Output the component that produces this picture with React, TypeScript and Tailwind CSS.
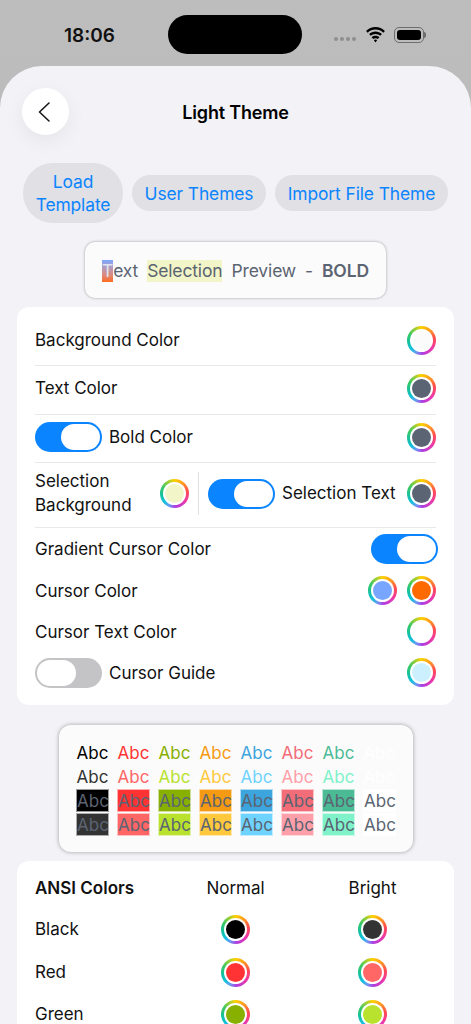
import React from 'react';

const normal = ['#000000', '#ff3333', '#88b000', '#f59a12', '#3da5dd', '#f26d78', '#4bbb96', '#ffffff'];
const bright = ['#333333', '#ff6666', '#b8e22e', '#ffc83d', '#6fd3ff', '#ff9fa9', '#7ff2c9', '#ffffff'];

function Well({ color }: { color: string }) {
  return (
    <div className="w-[29px] h-[29px] shrink-0 rounded-full p-[3px] bg-[conic-gradient(#ffd000_0deg,#ff9a20_40deg,#ff4a50_80deg,#ee38a8_125deg,#b03ce0_175deg,#6a9cf5_205deg,#12c0e0_228deg,#14c0a0_262deg,#3cc860_300deg,#a8d030_335deg,#ffd000_360deg)]">
      <div className="w-full h-full rounded-full bg-white p-[2px]">
        <div className="w-full h-full rounded-full" style={{ backgroundColor: color }} />
      </div>
    </div>
  );
}

function Toggle({ on }: { on: boolean }) {
  return on ? (
    <div className="w-[67px] h-[30px] shrink-0 rounded-full bg-[#0a84ff] p-[2px] flex justify-end">
      <div className="w-[39px] h-[26px] rounded-full bg-white" />
    </div>
  ) : (
    <div className="w-[67px] h-[30px] shrink-0 rounded-full bg-[#c4c4c6] p-[2px] flex justify-start">
      <div className="w-[39px] h-[26px] rounded-full bg-white" />
    </div>
  );
}

function Pill({ children, className }: { children: React.ReactNode; className: string }) {
  return (
    <div className={`bg-[#e0e0e5] text-[#0a84ff] text-center text-[17.4px] leading-[23px] tracking-[-0.1px] ${className}`}>
      {children}
    </div>
  );
}

function App() {
  return (
    <div className="h-[1024px] w-[471px] overflow-hidden bg-gradient-to-b from-[#bdbdbd] to-[#b0b0b0] text-[17px] text-[#111111] font-['Inter','Liberation_Sans',sans-serif]">
      <div className="h-[66px] flex pl-[64px]">
        <div className="w-[104px] pt-[23px] text-[19px] leading-[26px] font-semibold">18:06</div>
        <div className="w-[134px] h-[39px] mt-[15px] rounded-full bg-black" />
        <div className="ml-[32px] mt-[37px] flex gap-[2px] h-[5px]">
          <div className="w-[4px] h-[4px] rounded-full bg-[#8e8e8e]" />
          <div className="w-[4px] h-[4px] rounded-full bg-[#8e8e8e]" />
          <div className="w-[4px] h-[4px] rounded-full bg-[#8e8e8e]" />
          <div className="w-[4px] h-[4px] rounded-full bg-[#8e8e8e]" />
        </div>
        <svg className="ml-[9px] mt-[27px]" width="21" height="16" viewBox="0 0 21 16">
          <path d="M10.5 2.6c3 0 5.7 1.2 7.8 3.1l1.6-1.7C17.4 1.6 14.1 0 10.5 0S3.6 1.6 1.1 4l1.6 1.7c2.1-1.9 4.8-3.1 7.8-3.1z" fill="#000" />
          <path d="M10.5 7c1.8 0 3.4.7 4.7 1.8l1.7-1.7C15.2 5.5 13 4.5 10.5 4.5S5.8 5.5 4.1 7.1l1.7 1.7C7.1 7.7 8.7 7 10.5 7z" fill="#000" />
          <path d="M10.5 11.2c.9 0 1.6.3 2.2.8l1.7-1.7c-1-1-2.4-1.5-3.9-1.5s-2.9.5-3.9 1.5L8.3 12c.6-.5 1.3-.8 2.2-.8zM10.5 15.5l1.6-2.3c-.4-.4-1-.6-1.6-.6s-1.2.2-1.6.6z" fill="#000" />
        </svg>
        <div className="ml-[8px] mt-[27px] w-[30px] h-[16px] rounded-[5px] border border-[#6e6e6e] p-[2px]">
          <div className="w-full h-full rounded-[3px] bg-black" />
        </div>
        <div className="mt-[32px] w-[2px] h-[6px] rounded-r-full bg-[#6e6e6e]" />
      </div>

      <div className="h-[958px] rounded-t-[42px] bg-[#f2f2f7] px-[17px] pt-[22px]">
        <div className="h-[47px] flex items-center relative">
          <div className="absolute left-[5px] top-0 w-[47px] h-[47px] rounded-full bg-white shadow-[0_6px_20px_rgba(0,0,0,0.06)] flex items-center justify-center">
            <svg className="mr-[3px]" width="14" height="22" viewBox="0 0 14 22" fill="none" stroke="#111" strokeWidth="1.5" strokeLinecap="round" strokeLinejoin="round">
              <path d="M12 2 2.5 11l9.5 9" />
            </svg>
          </div>
          <div className="w-full text-center pt-[2px] text-[18px] font-semibold text-black tracking-[-0.2px]">Light Theme</div>
        </div>

        <div className="mt-[28px] h-[60px] flex items-center gap-[9px] pl-[6px]">
          <Pill className="w-[100px] h-[60px] rounded-[30px] py-[7px]">Load<br />Template</Pill>
          <Pill className="w-[134px] h-[36px] rounded-[18px] py-[7px]">User Themes</Pill>
          <Pill className="w-[173px] h-[36px] rounded-[18px] py-[7px]">Import File Theme</Pill>
        </div>

        <div className="mt-[19px] ml-[68px] w-[301px] h-[56px] rounded-[10px] bg-[#fbfbfb] shadow-[0_0_3px_rgba(0,0,0,0.35)] flex items-center pl-[17px] pt-[2px] text-[#5b6472] whitespace-nowrap text-[17.5px] tracking-[-0.15px]">
          <span className="h-[22px] leading-[22px] text-[#dfe3ee] bg-gradient-to-b from-[#7ba6ff] to-[#ff6a00]">T</span>
          <span>ext</span>
          <span className="ml-[9px] h-[22px] leading-[22px] bg-[#f1f5c8]">Selection</span>
          <span className="ml-[9px]">Preview</span>
          <span className="ml-[9px]">-</span>
          <span className="ml-[9px] font-semibold">BOLD</span>
        </div>

        <div className="mt-[9px] h-[398px] rounded-[12px] bg-white px-[18px] pt-[8px]">
          <div className="h-[51px] border-b border-[#e8e8ea] flex items-center justify-between">
            <span className="pt-[2px]">Background Color</span>
            <Well color="#fbfbfb" />
          </div>
          <div className="h-[49px] pb-[3px] border-b border-[#e8e8ea] flex items-center justify-between">
            <span className="pt-[1px]">Text Color</span>
            <Well color="#5b6472" />
          </div>
          <div className="h-[48px] pb-[3px] border-b border-[#e8e8ea] flex items-center">
            <Toggle on />
            <span className="ml-[7px] pt-[2px] flex-1">Bold Color</span>
            <Well color="#5b6472" />
          </div>
          <div className="h-[65px] pb-[3px] border-b border-[#e8e8ea] flex items-center">
            <span className="w-[125px] leading-[23.5px]">Selection<br />Background</span>
            <Well color="#f1f5c8" />
            <div className="w-px h-[43px] bg-[#e0e0e2] mx-[9px]" />
            <Toggle on />
            <span className="ml-[7px] flex-1 whitespace-nowrap">Selection Text</span>
            <Well color="#5b6472" />
          </div>
          <div className="h-[42px] flex items-center justify-between">
            <span className="pt-[2px]">Gradient Cursor Color</span>
            <div className="mr-[-2px]"><Toggle on /></div>
          </div>
          <div className="h-[41px] flex items-center">
            <span className="pt-[2px] flex-1">Cursor Color</span>
            <Well color="#78a6ff" />
            <div className="w-[10px]" />
            <Well color="#ff6a00" />
          </div>
          <div className="h-[41px] flex items-center justify-between">
            <span className="pt-[2px]">Cursor Text Color</span>
            <Well color="#ffffff" />
          </div>
          <div className="h-[41px] flex items-center">
            <Toggle on={false} />
            <span className="ml-[7px] pt-[2px] flex-1">Cursor Guide</span>
            <Well color="#cdf0ff" />
          </div>
        </div>

        <div className="mt-[20px] ml-[42px] w-[354px] h-[127px] rounded-[12px] bg-[#fbfbfb] shadow-[0_0_4px_rgba(0,0,0,0.35)] pl-[17px] pt-[16px]">
          <div className="grid grid-cols-[repeat(8,33px)] gap-x-[8px] auto-rows-[24px] text-center">
            {normal.map((c) => (
              <div key={`n${c}`} className="leading-[24px]" style={{ color: c }}>Abc</div>
            ))}
            {bright.map((c) => (
              <div key={`b${c}`} className="leading-[24px]" style={{ color: c }}>Abc</div>
            ))}
            {normal.map((c) => (
              <div key={`nb${c}`} className="h-[23px] leading-[23px] text-[#5b6472] border border-white/60" style={{ backgroundColor: c }}>Abc</div>
            ))}
            {bright.map((c) => (
              <div key={`bb${c}`} className="h-[23px] leading-[23px] text-[#5b6472] border border-white/60" style={{ backgroundColor: c }}>Abc</div>
            ))}
          </div>
        </div>

        <div className="mt-[9px] rounded-[12px] bg-white px-[18px] pt-[9px]">
          <div className="grid grid-cols-[132px_137px_137px] grid-rows-[38px_43px_42px_43px] items-center text-center">
            <span className="text-left font-semibold">ANSI Colors</span>
            <span>Normal</span>
            <span>Bright</span>
            <span className="text-left">Black</span>
            <div className="flex justify-center"><Well color="#000000" /></div>
            <div className="flex justify-center"><Well color="#333333" /></div>
            <span className="text-left pt-[1px]">Red</span>
            <div className="flex justify-center"><Well color="#ff3333" /></div>
            <div className="flex justify-center"><Well color="#ff6666" /></div>
            <span className="text-left">Green</span>
            <div className="flex justify-center"><Well color="#88b000" /></div>
            <div className="flex justify-center"><Well color="#b8e22e" /></div>
          </div>
        </div>
      </div>
    </div>
  );
}

export default App;
